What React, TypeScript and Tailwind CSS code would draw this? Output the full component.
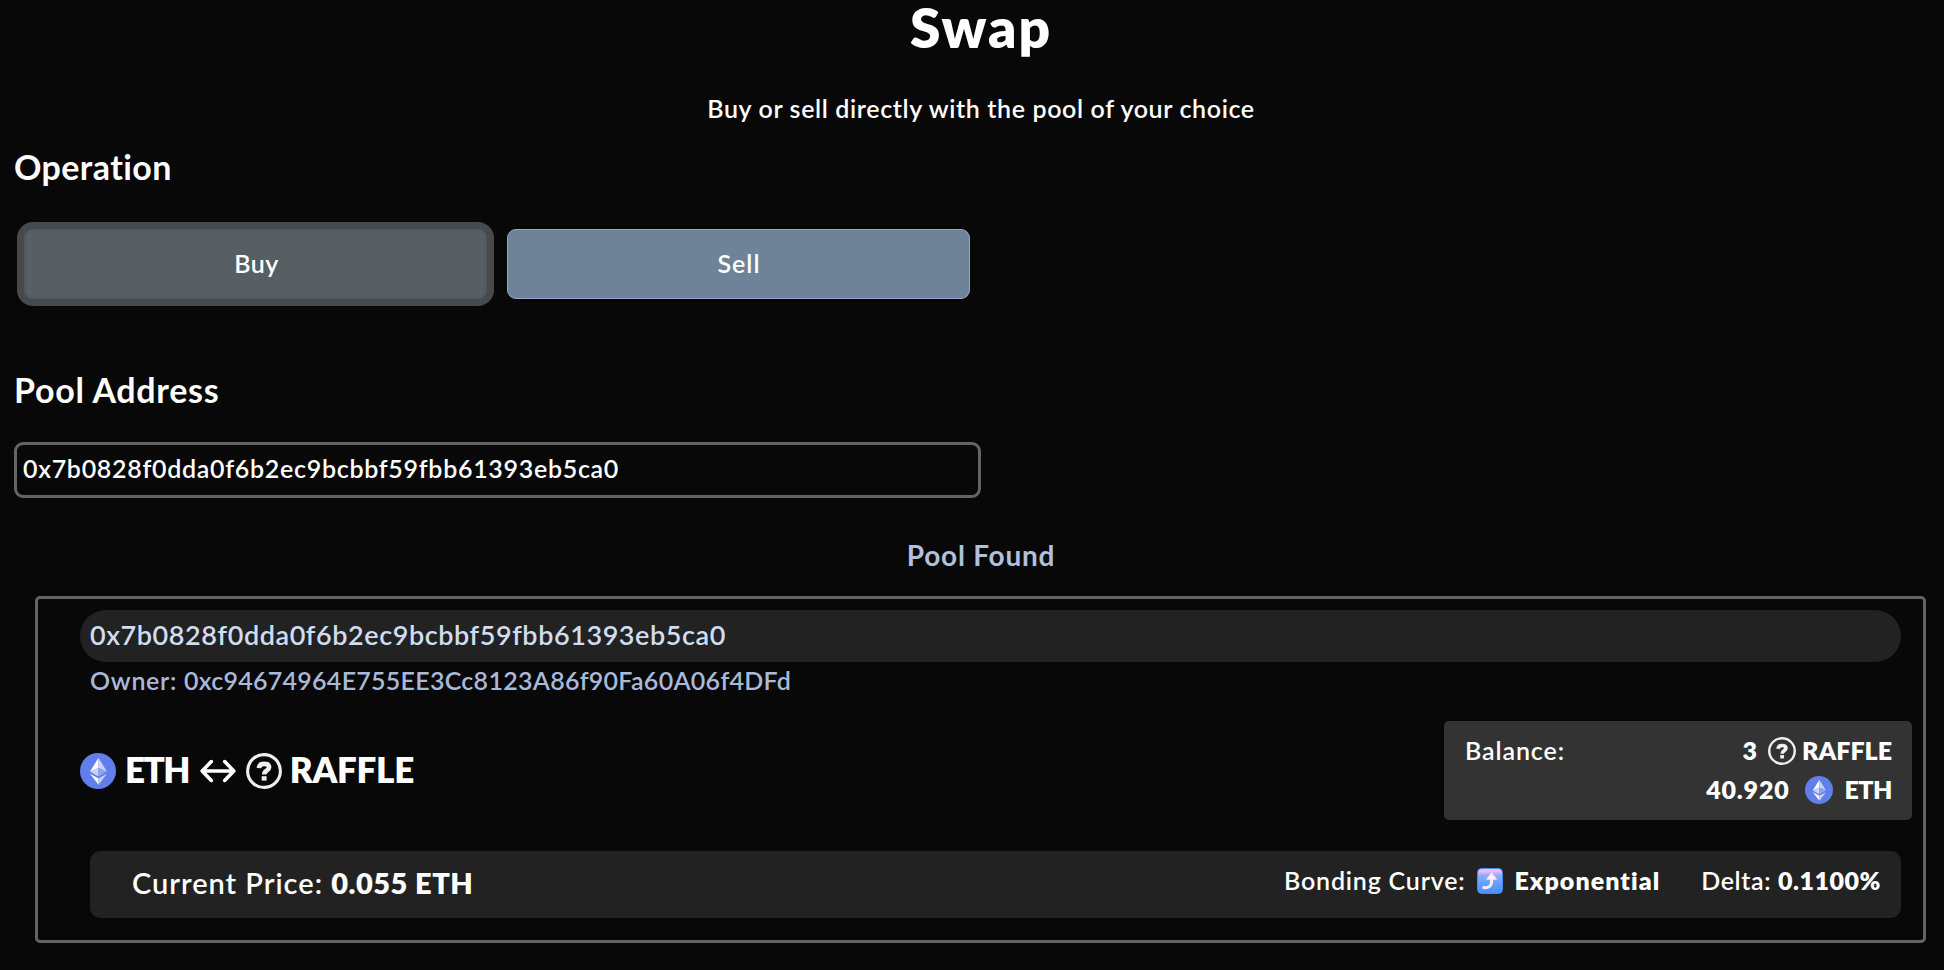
import clsx from 'clsx';

const POOL_ADDRESS = '0x7b0828f0dda0f6b2ec9bcbbf59fbb61393eb5ca0';
const OWNER = '0xc94674964E755EE3Cc8123A86f90Fa60A06f4DFd';

const EthIcon = ({ className }: { className?: string }) => (
  <svg viewBox="0 0 36 36" className={clsx('shrink-0', className)}>
    <circle cx="18" cy="18" r="18" fill="#627eea" />
    {/* upper half of the diamond */}
    <path d="M18.5 4.8 10 18.6l8.5-3.7z" fill="#fff" />
    <path d="M18.5 4.8v10.1l8.4 3.7z" fill="#c9d2f7" />
    <path d="M10 18.6l8.5-3.7v8.7z" fill="#c9d2f7" />
    <path d="M18.5 14.9l8.4 3.7-8.4 5z" fill="#8fa2ef" />
    {/* lower half */}
    <path d="M10 20.8l8.5 4.7v6.2z" fill="#fff" />
    <path d="M18.5 25.5l8.4-4.7-8.4 10.9z" fill="#c9d2f7" />
  </svg>
);

const QuestionIcon = ({ className }: { className?: string }) => (
  <svg viewBox="0 0 36 36" fill="none" className={clsx('shrink-0', className)}>
    <circle cx="18" cy="18" r="16.4" stroke="#efefef" strokeWidth="3.1" />
    <path
      d="M13 15.2C13.1 12.3 15.1 10.9 18.2 10.9c3 0 4.9 1.3 4.9 3.5 0 3-4.9 3-4.9 7.1"
      stroke="#efefef"
      strokeWidth="4.6"
    />
    <rect x="15.7" y="23.2" width="4.9" height="4.4" fill="#efefef" />
  </svg>
);

const SwapArrow = ({ className }: { className?: string }) => (
  <svg
    viewBox="0 0 36 24"
    fill="none"
    stroke="#fff"
    strokeWidth="3.6"
    strokeLinecap="round"
    strokeLinejoin="round"
    className={clsx('shrink-0', className)}
  >
    <path d="M2.5 12h31M11.3 2.6 2.2 12l9.1 9.4M24.7 2.6l9.1 9.4-9.1 9.4" />
  </svg>
);

const CurveIcon = ({ className }: { className?: string }) => (
  <svg viewBox="0 0 26 26" className={clsx('shrink-0', className)}>
    <defs>
      <linearGradient id="curve-bg" x1="0" y1="0" x2="0" y2="1">
        <stop offset="0" stopColor="#fbc3f2" />
        <stop offset="0.12" stopColor="#eeb9f6" />
        <stop offset="0.26" stopColor="#8fb0fb" />
        <stop offset="0.6" stopColor="#62a2fb" />
        <stop offset="1" stopColor="#4a8ffb" />
      </linearGradient>
    </defs>
    <rect x="0.6" y="0.6" width="24.8" height="24.8" rx="4" fill="url(#curve-bg)" stroke="#4a90f5" strokeWidth="1" />
    <path d="M6.8 19.6c5.2.3 7.8-1.6 7.8-6V10.5" fill="none" stroke="#fdeafd" strokeWidth="3" strokeLinecap="round" />
    <path d="M14.6 4.9 19.6 11.3H9.6z" fill="#fdeafd" stroke="#fdeafd" strokeWidth="0.8" strokeLinejoin="round" />
  </svg>
);

const Heading = ({ children, className }: { children: string; className?: string }) => (
  <h2 className={clsx('text-[34px] font-bold leading-10', className)}>{children}</h2>
);

const Operation = () => (
  <div className="mt-[42px] flex gap-5 pl-2.5">
    <button className="h-[70px] w-[463px] rounded-[9px] bg-[#575e64] pb-px pl-0.5 text-[25px] font-semibold tracking-[0.5px] shadow-[inset_0_0_2px_1px_#4f565b] ring-[7px] ring-[#464a4d]">
      Buy
    </button>
    <button className="h-[70px] w-[463px] rounded-[9px] border border-[#8ea8cf] bg-[#6f8398] pb-px pl-px text-[25px] font-semibold tracking-[1px]">
      Sell
    </button>
  </div>
);

const Balance = () => (
  <div className="flex h-[99px] w-[468px] justify-between rounded-[5px] bg-[#333333] pl-[21px] pr-5 pt-[10px] text-[25px] leading-[39px]">
    <span className="font-semibold tracking-[0.9px]">Balance:</span>
    <div className="flex flex-col items-end font-extrabold">
      <div className="flex items-center">
        <span>3</span>
        <QuestionIcon className="ml-[11px] mr-[6px] size-7" />
        <span>RAFFLE</span>
      </div>
      <div className="flex items-center">
        <span className="tracking-[0.8px]">40.920</span>
        <EthIcon className="ml-[15px] mr-[12px] size-7" />
        <span className="tracking-[-0.5px]">ETH</span>
      </div>
    </div>
  </div>
);

const PoolCard = () => (
  <section className="ml-[21px] mt-6 h-[347px] w-[1891px] rounded-[5px] border-[3px] border-[#646464] pl-[42px] pt-[11px]">
    <div className="h-[52px] w-[1821px] rounded-full bg-[#222222] pl-[10px] text-[27px] font-semibold leading-[49px] tracking-[0.57px] text-[#d0dcf0]">
      {POOL_ADDRESS}
    </div>
    <p className="mt-0.5 pl-[10px] text-[25px] font-semibold leading-8 tracking-[0.27px] text-[#a8bad8]">
      <span className="tracking-[0.7px]">Owner: </span>
      {OWNER}
    </p>

    <div className="mt-[25px] flex items-center justify-between pr-[11px]">
      <div className="flex items-center text-[35px] font-extrabold leading-[40px]">
        <EthIcon className="size-9" />
        <span className="-mt-[3px] ml-[9px] tracking-[-1.6px]">ETH</span>
        <SwapArrow className="ml-[11px] w-9" />
        <QuestionIcon className="ml-[10px] size-9" />
        <span className="-mt-[3px] ml-[8px] tracking-[-0.3px]">RAFFLE</span>
      </div>
      <Balance />
    </div>

    <div className="ml-[10px] mt-[31px] flex h-[67px] w-[1811px] items-center justify-between rounded-[10px] bg-[#222222] pl-[42px] pr-[20px]">
      <p className="pb-[3px] text-[29px] font-semibold tracking-[0.98px]">
        Current Price: <span className="font-extrabold tracking-[0.5px]">0.055 ETH</span>
      </p>
      <div className="flex items-center pb-[8px] text-[25px] font-semibold">
        <span className="tracking-[0.8px]">Bonding Curve:</span>
        <CurveIcon className="ml-[12px] mr-[11px] size-[26px]" />
        <span className="font-extrabold tracking-[1.05px]">Exponential</span>
        <span className="ml-[41px] tracking-[0.6px]">Delta:</span>
        <span className="ml-[7px] font-extrabold tracking-[0.5px]">0.1100%</span>
      </div>
    </div>
  </section>
);

export default function App() {
  return (
    <main className="h-[970px] overflow-hidden bg-[#080808] pl-[14px] font-['Lato',sans-serif] text-white">
      <h1 className="pl-1 text-center text-[55px] font-extrabold leading-[55px] tracking-[1.9px]">Swap</h1>
      <p className="mt-[35px] pl-1 text-center text-[25px] font-semibold leading-9 tracking-[0.63px]">
        Buy or sell directly with the pool of your choice
      </p>

      <Heading className="mt-[21px] tracking-[0.4px]">Operation</Heading>
      <Operation />

      <Heading className="mt-[71px] tracking-[0.7px]">Pool Address</Heading>
      <input
        className="mt-8 block h-14 w-[967px] rounded-[9px] border-[3px] border-[#646464] bg-transparent pb-[4px] pl-[6px] text-[25px] font-semibold tracking-[0.7px] outline-none"
        defaultValue={POOL_ADDRESS}
      />

      <p className="mt-10 pl-1 text-center text-[28px] font-bold leading-[34px] tracking-[0.75px] text-[#b0c0dd]">
        Pool Found
      </p>
      <PoolCard />
    </main>
  );
}
